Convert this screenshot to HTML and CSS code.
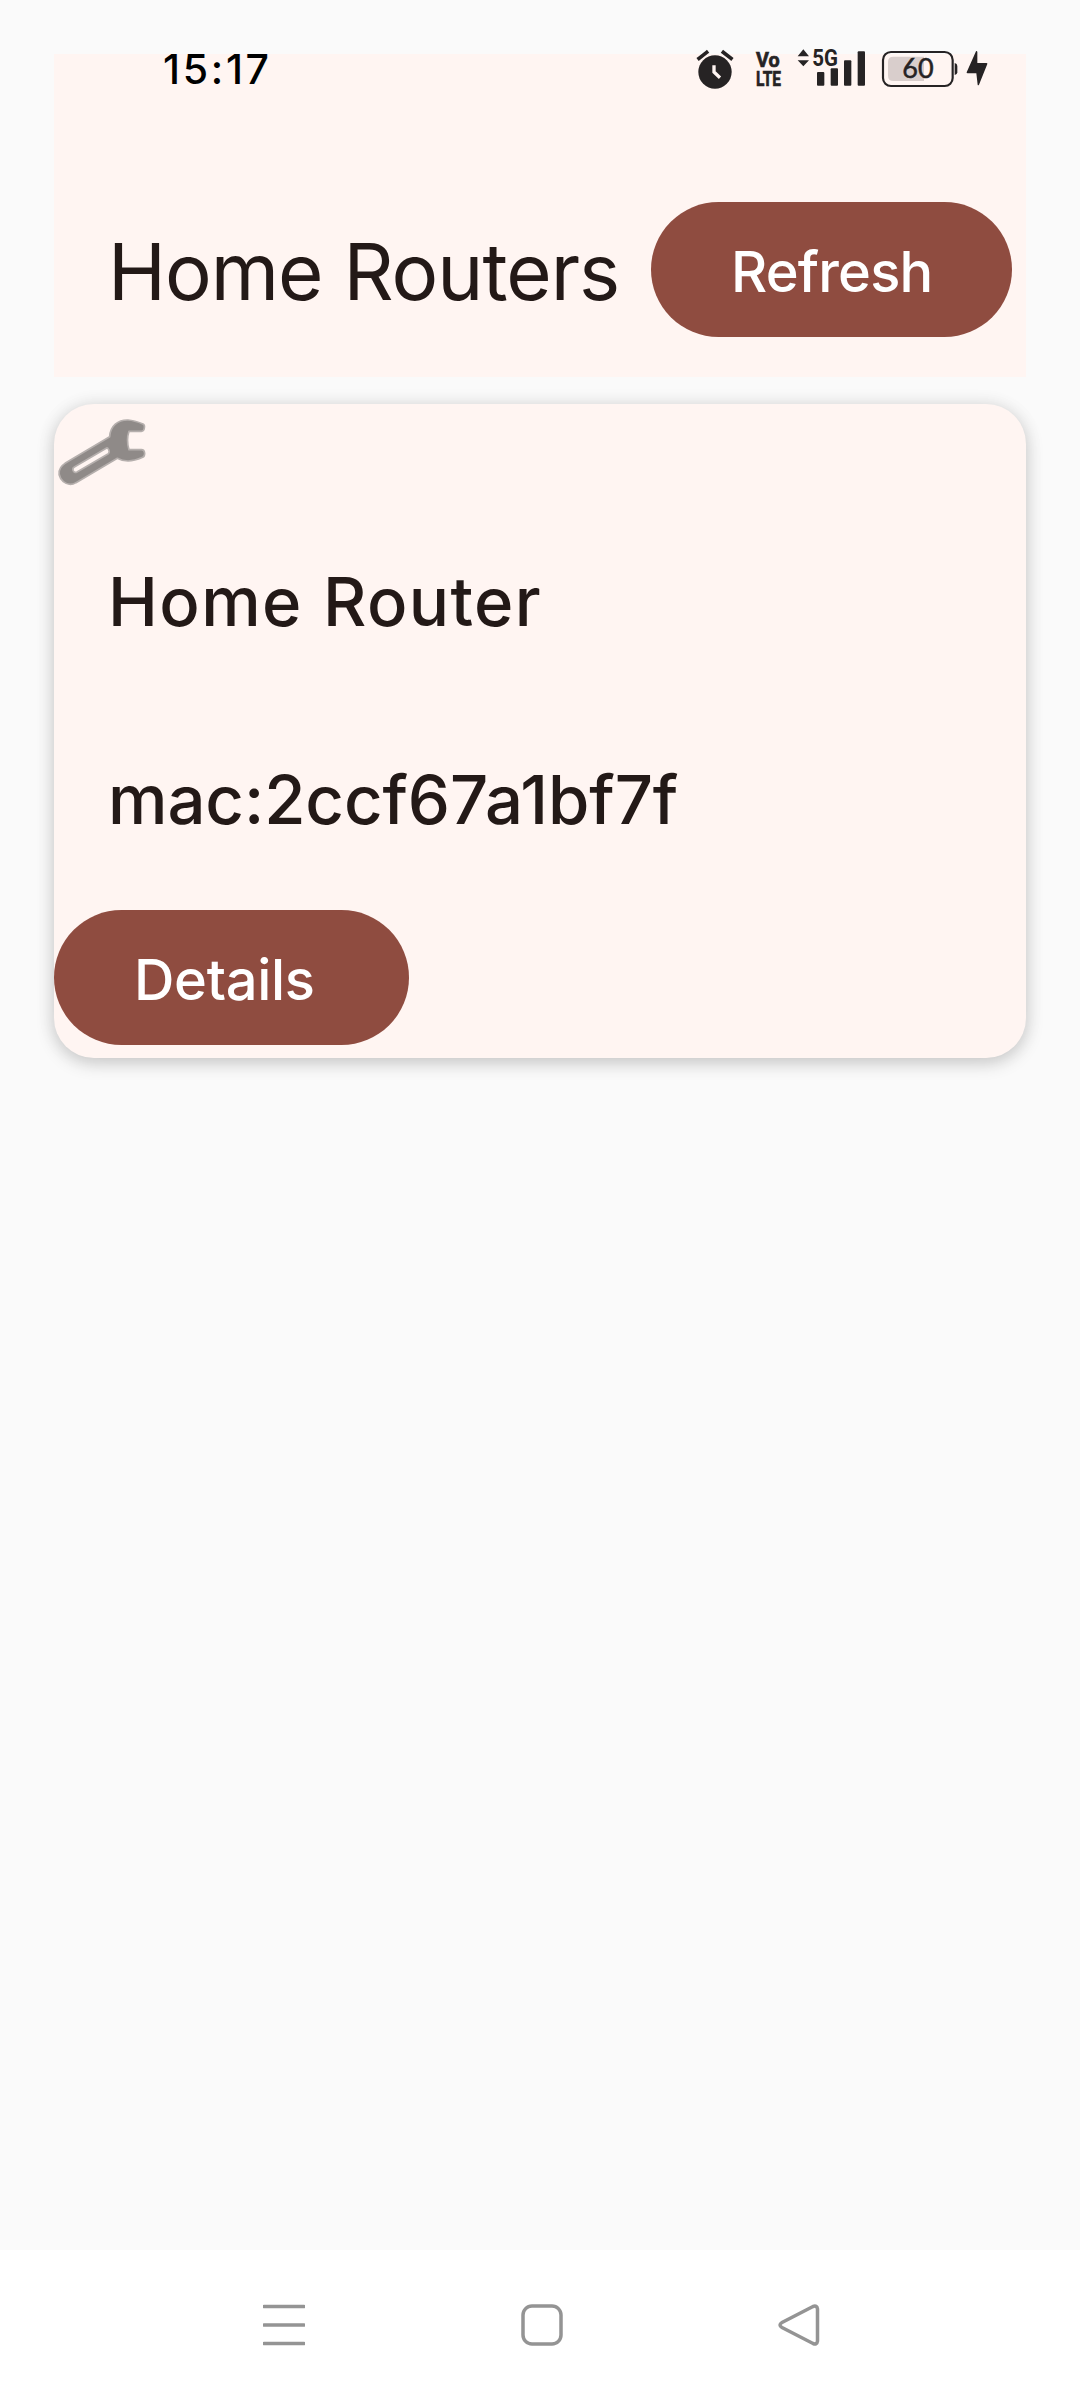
FILE: index.html
```
<!DOCTYPE html>
<html lang="en">
<head>
<meta charset="utf-8">
<title>Home Routers</title>
<link rel="stylesheet" href="styles.css">
</head>
<body>
<div class="status-bar">
  <span class="clock">15:17</span>
  <svg class="status-icons" viewBox="0 0 990 240" aria-hidden="true">
    <g fill="#262324">
      <circle cx="105" cy="126" r="50"/>
      <path d="M57 85l23-18M153 85l-23-18" stroke="#262324" stroke-width="11" stroke-linecap="square"/>
      <path d="M102 106v20l18 17" fill="none" stroke="#fff5f2" stroke-width="10"/>
      <path d="M353 79l17-21 17 21zM353 91l17 18 17-18z"/>
      <rect x="411" y="126" width="22" height="41" rx="3"/>
      <rect x="452" y="115" width="22" height="52" rx="3"/>
      <rect x="492" y="91" width="22" height="76" rx="3"/>
      <rect x="533" y="64" width="22" height="103" rx="3"/>
      <path d="M824 99q8 2 8 9v19q0 7-8 8z"/>
      <path d="M888 64l-28 63q-1 3 3 3h26l4 34q1 4 4 0l25-62q1-3-3-3h-27V66q-1-4-4-2z"/>
    </g>
    <g class="net">
      <text x="228" y="112" textLength="71" lengthAdjust="spacingAndGlyphs">Vo</text>
      <text x="228" y="167" textLength="75" lengthAdjust="spacingAndGlyphs">LTE</text>
      <text class="gen" x="397" y="109" textLength="77" lengthAdjust="spacingAndGlyphs">5G</text>
    </g>
    <path d="M640 80h92v73h-92q-16 0-16-16V96q0-16 16-16z" fill="#d9cecc"/>
    <rect x="609" y="66" width="209" height="102" rx="24" fill="none" stroke="#262324" stroke-width="6.500"/>
    <text class="level" x="667" y="145" textLength="94" lengthAdjust="spacingAndGlyphs">60</text>
  </svg>
</div>
<main class="screen">
  <header class="top">
    <h1 class="title">Home Routers</h1>
    <button class="btn refresh">Refresh</button>
  </header>
  <section class="card">
    <svg class="wrench" viewBox="0 0 270 210" aria-hidden="true">
      <path fill="#8f8a88" stroke="#b5afad" stroke-width="5" stroke-linejoin="round" fill-rule="evenodd" d="M167 98C169 66 192 47 222 48Q241 49 267 60Q273 63 271 72Q270 82 262 82H225Q216 109 225 137H262Q271 137 272 148Q272 158 266 160Q241 171 222 171Q204 171 190 163L66 236Q47 248 28 233Q7 212 20 191Q24 184 33 178ZM158 132L61 189Q55 192 57 199Q61 208 69 204L163 149Q168 145 164 137Q161 131 158 132Z"/>
    </svg>
    <p class="name">Home Router</p>
    <p class="mac">mac:2ccf67a1bf7f</p>
    <button class="btn details">Details</button>
  </section>
</main>
<nav class="nav-bar">
  <svg viewBox="0 0 42 42"><path d="M1 2.500h40M1 21h40M1 39.500h40" stroke-linecap="round"/></svg>
  <svg viewBox="0 0 42 42"><rect x="2" y="2" width="38" height="38" rx="9"/></svg>
  <svg viewBox="0 0 42 42"><path d="M35 2.500L4 18.500Q0 21 4 23.500L35 39.500Q39 41 39.500 37V5Q39 1 35 2.500Z"/></svg>
</nav>
</body>
</html>
```
FILE: styles.css
```
* { box-sizing: border-box; }
body {
  margin: 0;
  width: 1080px;
  height: 2400px;
  display: flex;
  flex-direction: column;
  background: #fafafa;
  color: #231917;
  font-family: Inter, "Liberation Sans", sans-serif;
}
.status-bar {
  position: absolute;
  top: 30px;
  left: 0;
  width: 1080px;
  height: 80px;
  padding: 0 70px 0 163px;
  display: flex;
  justify-content: space-between;
}
.clock {
  color: #000;
  font-size: 41px;
  line-height: 79px;
  letter-spacing: 2.7px;
  font-weight: 450;
}
.status-icons { width: 330px; height: 80px; }
.net {
  fill: #262324;
  stroke: #262324;
  stroke-width: 2;
  font-family: "Roboto", sans-serif;
  font-weight: 700;
  font-size: 63px;
}
.gen { stroke-width: 0; font-size: 71px; }
.level {
  fill: #262324;
  stroke: #262324;
  stroke-width: 1.5;
  font-family: Lato, sans-serif;
  font-size: 82px;
}
.screen {
  flex: 1;
  padding: 54px 54px 0;
}
.top {
  height: 323px;
  padding: 148px 14px 0 54px;
  display: flex;
  align-items: flex-start;
  justify-content: space-between;
  background: #fff5f2;
}
.title {
  margin: 0;
  font-size: 78px;
  line-height: 140px;
  font-weight: 400;
  letter-spacing: -1px;
  white-space: nowrap;
}
.btn {
  height: 135px;
  border: 0;
  border-radius: 68px;
  padding: 4px 0 0 80px;
  background: #8f4c40;
  color: #fff;
  font-family: inherit;
  font-size: 56px;
  font-weight: 450;
  text-align: left;
}
.refresh {
  width: 361px;
  flex: none;
  letter-spacing: -0.8px;
}
.details {
  width: 355px;
  letter-spacing: -0.3px;
}
.card {
  height: 654px;
  margin-top: 27px;
  border-radius: 40px;
  background: #fff5f2;
  box-shadow: 0 5px 18px rgba(0, 0, 0, .19), 0 0 20px rgba(0, 0, 0, .06);
  display: flex;
  flex-direction: column;
  align-items: flex-start;
}
.wrench {
  width: 90px;
  height: 70px;
  margin-bottom: 63px;
  overflow: visible;
}
.name, .mac {
  margin: 0;
  padding-left: 54px;
  font-size: 67px;
  line-height: 130px;
  font-weight: 450;
  white-space: nowrap;
}
.name {
  letter-spacing: 1.4px;
  word-spacing: 1px;
}
.mac {
  margin: 68px 0 45px;
  letter-spacing: -0.1px;
}
.nav-bar {
  height: 150px;
  padding: 0 260px 0 263px;
  display: flex;
  justify-content: space-between;
  align-items: center;
  background: #fff;
}
.nav-bar svg {
  width: 42px;
  height: 42px;
  fill: none;
  stroke: #949494;
  stroke-width: 3.500;
}
```
